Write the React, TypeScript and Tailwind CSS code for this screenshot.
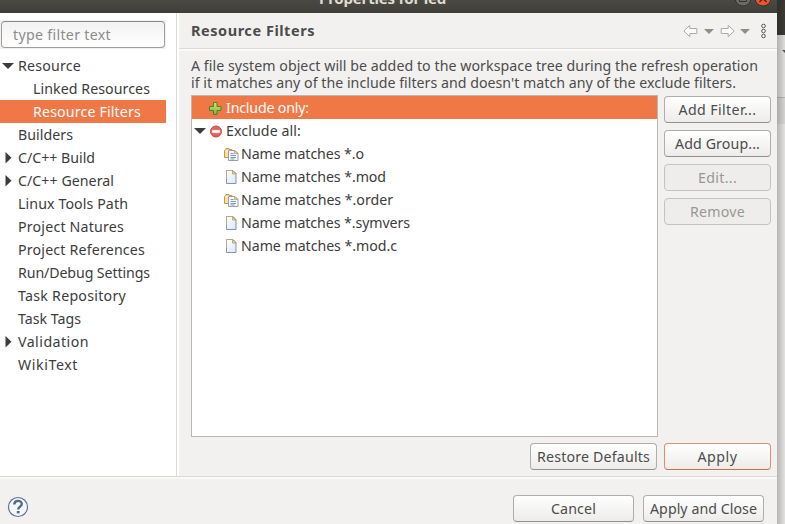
import { useLayoutEffect, useRef, useState, type ReactNode } from "react";

/** Single-line label whose tracking is tuned so the text spans `w` pixels. */
function Label({ children, w, className = "" }: { children: string; w: number; className?: string }) {
  const ref = useRef<HTMLSpanElement>(null);
  const [spacing, setSpacing] = useState(0);
  useLayoutEffect(() => {
    const el = ref.current;
    if (!el) return;
    el.style.letterSpacing = "0px";
    const natural = el.getBoundingClientRect().width;
    setSpacing((w - natural) / children.length);
    el.style.letterSpacing = `${(w - natural) / children.length}px`;
  }, [children, w]);
  return (
    <span ref={ref} className={`inline-block whitespace-pre ${className}`} style={{ letterSpacing: spacing }}>
      {children}
    </span>
  );
}

type Node = { text: string; w: number; level?: number; arrow?: "open" | "closed"; selected?: boolean };

const pages: Node[] = [
  { text: "Resource", w: 63, arrow: "open" },
  { text: "Linked Resources", w: 117, level: 1 },
  { text: "Resource Filters", w: 108, level: 1, selected: true },
  { text: "Builders", w: 55 },
  { text: "C/C++ Build", w: 77, arrow: "closed" },
  { text: "C/C++ General", w: 96, arrow: "closed" },
  { text: "Linux Tools Path", w: 110 },
  { text: "Project Natures", w: 106 },
  { text: "Project References", w: 127 },
  { text: "Run/Debug Settings", w: 132 },
  { text: "Task Repository", w: 108 },
  { text: "Task Tags", w: 63 },
  { text: "Validation", w: 71, arrow: "closed" },
  { text: "WikiText", w: 60 },
];

const filters = [
  { text: "Name matches *.o", w: 123, folder: true },
  { text: "Name matches *.mod", w: 145, folder: false },
  { text: "Name matches *.order", w: 152, folder: true },
  { text: "Name matches *.symvers", w: 169, folder: false },
  { text: "Name matches *.mod.c", w: 156, folder: false },
];

function Arrow({ kind }: { kind?: "open" | "closed" }) {
  return (
    <svg width="12" height="12" viewBox="0 0 12 12" fill="#3c3c3c" className="shrink-0">
      {kind === "open" && <path d="M0 3h12L6 9z" />}
      {kind === "closed" && <path d="M3.500 0v11.500L9.500 5.700z" />}
    </svg>
  );
}

function FileIcon() {
  return (
    <svg width="16" height="16" viewBox="0 0 16 16" className="shrink-0">
      <defs>
        <linearGradient id="sheet" x2="1" y2="1">
          <stop stopColor="#fdfeff" />
          <stop offset="1" stopColor="#dce8f8" />
        </linearGradient>
      </defs>
      <path d="M3.500 1.500h6.500l3 3v10H3.500z" fill="url(#sheet)" stroke="#8892aa" />
      <path d="M3.500 10V1.500h6.500" fill="none" stroke="#b5ab84" />
      <path d="M9.500 1.500v3.500h3.500z" fill="#e8d9a2" stroke="#b39c5c" strokeWidth=".8" />
    </svg>
  );
}

function FolderFileIcon() {
  return (
    <svg width="16" height="16" viewBox="0 0 16 16" className="shrink-0">
      <path d="M1.500 11.500V4.500l1-1h.5v-1h3v1l.5 0h2.500v8z" fill="#fbdf9c" stroke="#cf9340" />
      <path d="M2.500 5h4" stroke="#fff1cf" />
      <path d="M5.500 4.500h6.500l3 3v7H5.500z" fill="#f4f8fe" stroke="#9a9fa9" />
      <path d="M11.500 4.500v3h3.500z" fill="#e3d5a0" stroke="#b39c5c" strokeWidth=".7" />
      <path d="M7.500 7.500h3M7.500 9.500h5.500M7.500 11.500h5.500M7.500 13h4" stroke="#7f95c8" />
    </svg>
  );
}

function PlusIcon() {
  return (
    <svg width="16" height="16" viewBox="0 0 16 16" className="shrink-0">
      <defs>
        <linearGradient id="plus" x2="0" y2="1">
          <stop stopColor="#d2ea62" />
          <stop offset="1" stopColor="#78b52f" />
        </linearGradient>
      </defs>
      <path d="M6.500 2.500h3.500v4h4v4h-4v4H6.500v-4h-4v-4h4z" fill="url(#plus)" stroke="#4f7d3c" />
    </svg>
  );
}

function ExcludeIcon() {
  return (
    <svg width="16" height="16" viewBox="0 0 16 16" className="shrink-0">
      <circle cx="8" cy="8.500" r="5.500" fill="#e2625f" stroke="#cb4a4c" />
      <rect x="4" y="7" width="8" height="3" fill="#fff" stroke="#e99a98" strokeWidth=".5" />
    </svg>
  );
}

function Button({ text, w, className = "", disabled = false, focus = false }: { text: string; w: number; className?: string; disabled?: boolean; focus?: boolean }) {
  const look = disabled
    ? "border-[#c5c3c1] bg-[#eeedec] text-[#9a9793]"
    : focus
      ? "border-[#dc8f72] border-b-[#c96f4e] bg-linear-to-b from-white to-[#edecea] text-[#4c4c4c]"
      : "border-[#b0aeab] border-b-[#93918d] bg-linear-to-b from-white to-[#edecea] text-[#4c4c4c]";
  return (
    <button disabled={disabled} className={`flex h-[27px] items-center justify-center rounded-[4px] border ${look} ${className}`}>
      <Label w={w}>{text}</Label>
    </button>
  );
}

function Divider() {
  return <div className="h-[3px] shrink-0 border-t border-[#dbdad8] bg-[#f9f9f8]" />;
}

function TreeRow({ selected, children, className = "" }: { selected?: boolean; children: ReactNode; className?: string }) {
  return (
    <div className={`flex h-[23px] items-center ${selected ? "bg-[#f07746] text-white" : "text-[#3c3c3c]"} ${className}`}>{children}</div>
  );
}

function Titlebar() {
  return (
    <header className="relative h-[13px] shrink-0 overflow-hidden bg-linear-to-b from-[#4a4943] to-[#3f3e39]">
      <div className="absolute top-[-12px] left-[319px] text-[15px] leading-[20px] font-bold text-[#dfdbd2]">
        <Label w={127}>Properties for led</Label>
      </div>
      <svg className="absolute top-0 left-[730px]" width="47" height="13" viewBox="0 0 47 13">
        <circle cx="13" cy="-2" r="8" fill="#6b6a64" stroke="#34332f" />
        <path d="M9.500-5v6.500h7V-5" fill="none" stroke="#34332f" />
        <circle cx="33" cy="-2" r="8" fill="#e8562a" stroke="#34332f" />
        <path d="M29.500 2l7-7M36.500 2l-7-7" stroke="#5a2413" strokeWidth="1.500" />
      </svg>
    </header>
  );
}

function Sidebar() {
  return (
    <nav className="flex w-[179px] shrink-0 bg-white">
      <div className="flex w-[176px] flex-col pt-[7px]">
        <div className="mb-[5px] w-[166px] bg-[#f2f1f0] p-px">
          <div className="flex h-[27px] items-center rounded-[4px] border border-[#a09e9a] border-t-[#8c8a87] bg-linear-to-b from-[#f2f2f2] to-white pl-[11px] text-[#8c8c8c]">
            <Label w={98}>type filter text</Label>
          </div>
        </div>
        {pages.map((p) => (
          <TreeRow key={p.text} selected={p.selected} className={p.level ? "w-[166px] pl-[17px]" : "w-[166px] pl-[2px]"}>
            <Arrow kind={p.arrow} />
            <Label w={p.w} className="ml-[4px]">{p.text}</Label>
          </TreeRow>
        ))}
      </div>
      <div className="w-px bg-[#dbdad8]" />
    </nav>
  );
}

function HistoryTools() {
  return (
    <svg width="86" height="16" viewBox="0 0 86 16">
      <path d="M.8 8l6-5.700v3.200h7v5h-7v3.200z" fill="#fbfbfb" stroke="#aaa" />
      <path d="M21 6h10l-5 5z" fill="#8f8f86" />
      <path d="M51.200 8l-6-5.700v3.200h-7v5h7v3.200z" fill="#fbfbfb" stroke="#aaa" />
      <path d="M57 6h10l-5 5z" fill="#8f8f86" />
      <g fill="#fff" stroke="#555">
        <circle cx="80.500" cy="3" r="1.800" />
        <circle cx="80.500" cy="8" r="1.800" />
        <circle cx="80.500" cy="13" r="1.800" />
      </g>
    </svg>
  );
}

function FilterPage() {
  return (
    <main className="flex min-w-0 flex-1 flex-col">
      <div className="flex h-[35px] shrink-0 items-center justify-between pr-[8px] pl-[12px]">
        <h1 className="pb-[2px] text-[14.5px] font-bold text-[#4c4c4c]">
          <Label w={124}>Resource Filters</Label>
        </h1>
        <HistoryTools />
      </div>
      <Divider />
      <p className="mt-[6px] flex h-[38px] shrink-0 flex-col items-start pl-[12px] leading-[17px] text-[#4c4c4c]">
        <Label w={567}>A file system object will be added to the workspace tree during the refresh operation</Label>
        <Label w={545}>if it matches any of the include filters and doesn't match any of the exclude filters.</Label>
      </p>
      <div className="flex gap-[6px] pl-[12px]">
        <div className="h-[342px] w-[467px] border border-[#b9b7b3] bg-white">
          <TreeRow selected className="pl-[15px]">
            <PlusIcon />
            <Label w={83} className="ml-[3px]">Include only:</Label>
          </TreeRow>
          <TreeRow className="pl-[2px]">
            <Arrow kind="open" />
            <span className="ml-[2px]"><ExcludeIcon /></span>
            <Label w={75} className="ml-[2px]">Exclude all:</Label>
          </TreeRow>
          {filters.map((f) => (
            <TreeRow key={f.text} className="pl-[31px]">
              {f.folder ? <FolderFileIcon /> : <FileIcon />}
              <Label w={f.w} className="ml-[2px]">{f.text}</Label>
            </TreeRow>
          ))}
        </div>
        <div className="flex w-[107px] flex-col gap-[7px] pt-px">
          <Button text="Add Filter..." w={78} />
          <Button text="Add Group..." w={85} />
          <Button text="Edit..." w={39} disabled />
          <Button text="Remove" w={55} disabled />
        </div>
      </div>
      <div className="mt-[6px] flex justify-end gap-[7px] pr-[6px]">
        <Button text="Restore Defaults" w={113} className="w-[127px]" />
        <Button text="Apply" w={40} focus className="w-[107px]" />
      </div>
    </main>
  );
}

function Footer() {
  return (
    <footer className="flex h-[45px] items-start gap-[9px] pt-[16px] pr-[13px] pl-[7px]">
      <svg className="mr-auto" width="22" height="26" viewBox="0 0 22 26">
        <circle cx="11" cy="12" r="9.500" fill="#f6f7fa" stroke="#5f7394" strokeWidth="1.200" />
        <path d="M7.300 9.500C7.300 4.800 14.800 4.800 14.800 9c0 2.600-3.600 2.700-3.600 5.500" fill="none" stroke="#526a90" strokeWidth="2.400" />
        <rect x="9.800" y="16" width="2.800" height="2.400" fill="#526a90" />
      </svg>
      <Button text="Cancel" w={45} className="w-[121px]" />
      <Button text="Apply and Close" w={107} className="w-[121px]" />
    </footer>
  );
}

/** Slice of the parent window that shows to the right of the dialog. */
function ParentWindow() {
  return (
    <aside className="relative flex flex-1 flex-col overflow-hidden">
      <div className="h-[35px] bg-[#3b3a36]" />
      <div className="h-[62px] bg-[#dedddc]" />
      <div className="h-[27px] border-t border-[#b5b4b2] bg-[#d5d4d2]" />
      <div className="flex-1 bg-[#e3e2e1]" />
      <div className="absolute inset-0 bg-linear-to-r from-black/20 to-transparent" />
      <svg className="absolute top-[50px] left-[5px]" width="8" height="5" viewBox="0 0 8 5">
        <path d="M0 0h8L4 4z" fill="#55544f" />
      </svg>
    </aside>
  );
}

export default function App() {
  return (
    <div className="flex h-[524px] w-[785px] overflow-hidden bg-[#f2f1f0] font-['Noto_Sans','Open_Sans',sans-serif] text-[14.2px] leading-[20px]">
      <div className="flex w-[777px] shrink-0 flex-col">
        <Titlebar />
        <div className="flex h-[463px] shrink-0">
          <Sidebar />
          <FilterPage />
        </div>
        <Divider />
        <Footer />
      </div>
      <ParentWindow />
    </div>
  );
}
